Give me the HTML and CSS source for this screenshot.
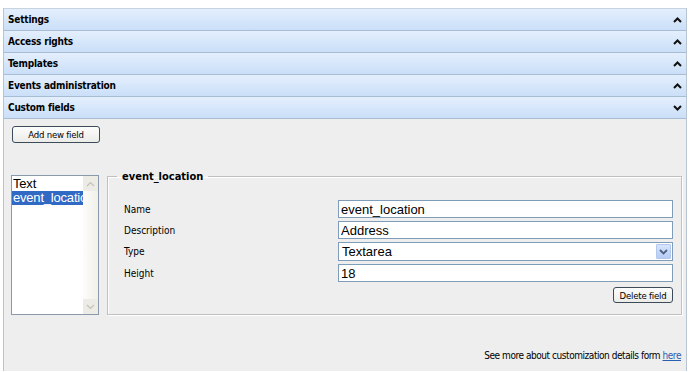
FILE: index.html
```html
<!DOCTYPE html>
<html>
  <head>
    <meta charset="UTF-8">
    <title>Custom fields</title>
    <link rel="stylesheet" href="styles.css">
  </head>
  <body>
    <div class="accordion">
      <div class="acc-head"><span>Settings</span><svg class="chev" width="9" height="6" viewBox="0 0 9 6"><polyline points="1,5 4.5,1.5 8,5"/></svg></div>
      <div class="acc-head"><span>Access rights</span><svg class="chev" width="9" height="6" viewBox="0 0 9 6"><polyline points="1,5 4.5,1.5 8,5"/></svg></div>
      <div class="acc-head"><span>Templates</span><svg class="chev" width="9" height="6" viewBox="0 0 9 6"><polyline points="1,5 4.5,1.5 8,5"/></svg></div>
      <div class="acc-head"><span>Events administration</span><svg class="chev" width="9" height="6" viewBox="0 0 9 6"><polyline points="1,5 4.5,1.5 8,5"/></svg></div>
      <div class="acc-head"><span>Custom fields</span><svg class="chev" width="9" height="6" viewBox="0 0 9 6"><polyline points="1,1 4.5,4.5 8,1"/></svg></div>
      <div class="acc-body">
        <button class="btn btn-add">Add new field</button>
        <div class="editor">
          <div class="listbox">
            <div class="list-items">
              <div class="list-item">Text</div>
              <div class="list-item selected">event_location</div>
            </div>
            <div class="scrollbar">
              <div class="sb-btn"><svg width="9" height="6" viewBox="0 0 9 6"><polyline points="1,5 4.5,1.5 8,5"/></svg></div>
              <div class="sb-btn"><svg width="9" height="6" viewBox="0 0 9 6"><polyline points="1,1 4.5,4.5 8,1"/></svg></div>
            </div>
          </div>
          <fieldset class="field-box">
            <legend>event_location</legend>
            <div class="form-grid">
              <label>Name</label>
              <input type="text" value="event_location">
              <label>Description</label>
              <input type="text" value="Address">
              <label>Type</label>
              <div class="select"><span>Textarea</span><span class="sel-arrow"><svg width="9" height="6" viewBox="0 0 9 6"><polyline points="1,1 4.5,4.5 8,1"/></svg></span></div>
              <label>Height</label>
              <input type="text" value="18">
            </div>
            <div class="actions"><button class="btn btn-del">Delete field</button></div>
          </fieldset>
        </div>
        <div class="footer-note">See more about customization details form <a href="#">here</a></div>
      </div>
    </div>
  </body>
</html>
```

FILE: styles.css
```css
body {
  margin:8px 3px 0px 3px;
  font-family:"DejaVu Sans Condensed", "DejaVu Sans", sans-serif;
  font-size:10px;
  color:#000;
  background:#fff;
}
.accordion {
  border-left:1px solid #b8c4d2;
  border-right:1px solid #b8c4d2;
  border-top:1px solid #c8d3e0;
}
.acc-head {
  display:flex;
  justify-content:space-between;
  align-items:center;
  height:21px;
  padding:0px 4px 0px 4px;
  background:linear-gradient(#e4effd, #cadff8);
  border-bottom:1px solid #a8bdd4;
  font-weight:bold;
  font-size:10px;
  letter-spacing:-0.2px;
}
.chev polyline {
  fill:none;
  stroke:#111;
  stroke-width:2;
}
.acc-body {
  background:#eeeeee;
  padding:7px 4px 0px 7px;
  height:252px;
  box-sizing:border-box;
  display:flex;
  flex-direction:column;
}
.btn {
  font-family:"DejaVu Sans Condensed", "DejaVu Sans", sans-serif;
  font-size:9.5px;
  letter-spacing:-0.2px;
  background:linear-gradient(#fdfdfd, #ebebe8);
  border:1px solid #3c4a5a;
  border-radius:3px;
  padding:0px;
  color:#000;
}
.btn-add {
  width:88px;
  height:17px;
  margin-left:1px;
}
.editor {
  display:flex;
  gap:8px;
  margin-top:27px;
  align-items:flex-start;
}
.listbox {
  width:86px;
  height:138px;
  margin-top:5px;
  border:1px solid #8a9aaa;
  background:#fff;
  display:flex;
  font-family:"Liberation Sans", Arial, sans-serif;
  font-size:13px;
  overflow:hidden;
}
.list-items {
  flex:1;
  overflow:hidden;
  padding-top:1px;
}
.list-item {
  white-space:nowrap;
  line-height:14px;
  padding-left:1px;
  letter-spacing:-0.2px;
}
.list-item.selected {
  background:#316ac5;
  color:#fff;
}
.scrollbar {
  width:15px;
  background:linear-gradient(90deg, #fcfcfa, #f1f0ea);
  display:flex;
  flex-direction:column;
  justify-content:space-between;
}
.sb-btn {
  height:15px;
  background:#ecebe5;
  display:flex;
  align-items:center;
  justify-content:center;
}
.sb-btn polyline {
  fill:none;
  stroke:#c2c1b8;
  stroke-width:1.2;
}
.field-box {
  flex:1;
  margin:0px;
  border:1px solid #c0c0c0;
  box-shadow:inset 1px 1px 0px #fff, 1px 1px 0px #fff;
  padding:17px 8px 6px 16px;
  height:145px;
  box-sizing:border-box;
}
.field-box legend {
  font-weight:bold;
  font-size:11px;
  padding:0px 5px;
  margin-left:-7px;
}
.form-grid {
  display:grid;
  grid-template-columns:214px 1fr;
  row-gap:3px;
  align-items:center;
}
.form-grid label {
  font-size:10px;
}
.form-grid input, .select {
  height:18px;
  box-sizing:border-box;
  border:1px solid #7f9db9;
  background:#fff;
  font-family:"Liberation Sans", Arial, sans-serif;
  font-size:13px;
  padding:0px 2px;
  margin:0px;
}
.select {
  display:flex;
  justify-content:space-between;
  align-items:center;
  height:19px;
  padding:0px 1px 0px 3px;
}
.sel-arrow {
  width:15px;
  height:15px;
  background:linear-gradient(#d8e5fb, #b4cbf4);
  border:1px solid #b3c8ef;
  border-radius:1px;
  box-sizing:border-box;
  display:flex;
  align-items:center;
  justify-content:center;
}
.sel-arrow polyline {
  fill:none;
  stroke:#4d6185;
  stroke-width:1.8;
}
.actions {
  display:flex;
  justify-content:flex-end;
  margin-top:5px;
}
.btn-del {
  width:60px;
  height:16px;
}
.footer-note {
  margin-top:auto;
  margin-bottom:10px;
  text-align:right;
  padding-right:1px;
  font-size:10px;
  letter-spacing:-0.45px;
}
.footer-note a {
  color:#2a5db0;
}
```
